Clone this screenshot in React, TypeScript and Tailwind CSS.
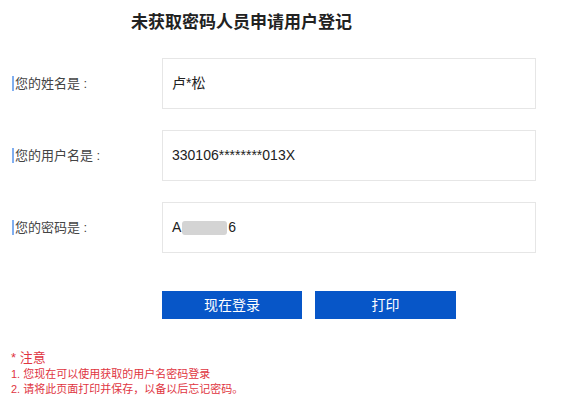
import React from "react";

const font = { fontFamily: '"Liberation Sans", "Noto Sans CJK SC", sans-serif' };

export default function App() {
  const rows = [
    { label: "您的姓名是 :", value: <span>卢*松</span> },
    { label: "您的用户名是 :", value: <span>330106********013X</span> },
    {
      label: "您的密码是 :",
      value: (
        <span className="flex items-center">
          A
          <span className="inline-block w-[45px] h-[14px] bg-[#d4d4d4] rounded-[3px] mx-[1px]" />
          6
        </span>
      ),
    },
  ];

  return (
    <div className="w-[575px] h-[412px] bg-white text-[#333]" style={font}>
      <div className="flex justify-center pt-[12px] pr-[92px]">
        <h1 className="text-[17px] font-bold leading-[22px] text-[#222]">
          未获取密码人员申请用户登记
        </h1>
      </div>

      <div className="mt-[24px] flex flex-col gap-[21px]">
        {rows.map((row, i) => (
          <div key={i} className="flex items-center">
            <div className="w-[162px] pl-[12px] flex items-center">
              <span className="w-[2px] h-[15px] bg-[#80aef0]" />
              <span className="ml-[1px] text-[13px] text-[#444]">{row.label}</span>
            </div>
            <div className="w-[374px] h-[51px] border border-[#e6e6e6] flex items-center pl-[9px] text-[14px] text-[#222]">
              {row.value}
            </div>
          </div>
        ))}
      </div>

      <div className="mt-[38px] flex gap-[13px] pl-[162px]">
        <button className="w-[140px] h-[28px] bg-[#0756c8] text-white text-[14px]">
          现在登录
        </button>
        <button className="w-[141px] h-[28px] bg-[#0756c8] text-white text-[14px]">
          打印
        </button>
      </div>

      <div className="mt-[30px] pl-[11px] text-[#e0353f]">
        <p className="text-[13px] leading-[18px]">* 注意</p>
        <ul className="text-[11px] leading-[15px]">
          <li>1. 您现在可以使用获取的用户名密码登录</li>
          <li>2. 请将此页面打印并保存，以备以后忘记密码。</li>
        </ul>
      </div>
    </div>
  );
}
